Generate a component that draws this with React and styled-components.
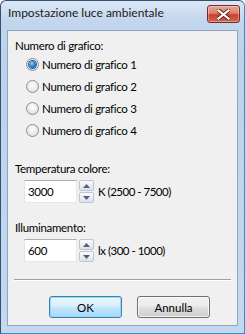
import React from 'react';
import styled, { createGlobalStyle } from 'styled-components';

/* global */

const GlobalStyle = createGlobalStyle`
  html, body {
    margin: 0;
    padding: 0;
    background: #ffffff;
  }
  body {
    font-family: Lato, "Liberation Sans", Arial, sans-serif;
    font-size: 11.5px;
    letter-spacing: -0.3px;
    color: #000000;
  }
`;

/* window frame */

const Window = styled.div`
  width: 245px;
  height: 334px;
  box-sizing: border-box;
  display: flex;
  flex-direction: column;
  border: 1px solid #34506f;
  border-right-color: #2f8fd6;
  border-bottom-color: #2f8fd6;
  border-radius: 6px 6px 0 0;
  background: linear-gradient(180deg, #dbe7f5 0px, #c3d6ee 20px, #bcd2ec 60px, #c4d8f0 100%);
  padding: 0 6px 7px 6px;
`;

const TitleBar = styled.div`
  height: 29px;
  display: flex;
  align-items: flex-start;
  justify-content: space-between;
`;

const Title = styled.span`
  margin-top: 4px;
  padding-left: 1px;
  font-size: 12px;
  letter-spacing: 0;
  line-height: 16px;
  color: #1a1a1a;
`;

const CloseButton = styled.div`
  margin-top: 4px;
  margin-right: -2px;
  width: 33px;
  height: 18px;
  box-sizing: border-box;
  display: flex;
  align-items: center;
  justify-content: center;
  border: 1px solid #6e2e25;
  border-radius: 3px;
  background: linear-gradient(180deg, #eaa596 0%, #dc7f6a 45%, #c8412b 55%, #d5644c 100%);
  box-shadow: inset 0 0 0 1px rgba(255, 255, 255, 0.35);
`;

const Client = styled.div`
  flex: 1;
  background: #f0f0f0;
  border: 1px solid #8ea6c4;
  display: flex;
  flex-direction: column;
  padding: 7px 0 0 7px;
`;

/* content */

const Label = styled.div`
  line-height: 15px;
  margin-bottom: ${props => props.gap || 0}px;
  margin-top: ${props => props.top || 0}px;
`;

const RadioList = styled.div`
  display: flex;
  flex-direction: column;
  gap: 9px;
  padding-left: 11px;
`;

const RadioRow = styled.label`
  display: flex;
  align-items: center;
  height: 13px;
  gap: 3px;
`;

const RadioCircle = styled.span`
  width: 13px;
  height: 13px;
  box-sizing: border-box;
  border-radius: 50%;
  border: 1px solid #8e8f8f;
  background: radial-gradient(circle at 50% 40%, #ffffff 0%, #e8e8e8 60%, #cfcfcf 100%);
  display: flex;
  align-items: center;
  justify-content: center;

  &::after {
    content: '';
    display: ${props => (props.checked ? 'block' : 'none')};
    width: 7px;
    height: 7px;
    border-radius: 50%;
    background: radial-gradient(circle at 40% 35%, #8fd0ff 0%, #2a87d6 45%, #0b4a8f 100%);
    box-shadow: 0 0 0 1px #1f5f9e;
  }
`;

const SpinRow = styled.div`
  display: flex;
  align-items: center;
  padding-left: 9px;
  gap: 2px;
`;

const NumberBox = styled.div`
  width: 53px;
  height: 23px;
  box-sizing: border-box;
  border: 1px solid #e3e9ef;
  border-top-color: #abadb3;
  border-left-color: #e2e3ea;
  background: #ffffff;
  padding: 3px 0 0 3px;
  line-height: 15px;
`;

const SpinButtons = styled.div`
  display: flex;
  flex-direction: column;
  gap: 1px;
  height: 23px;
`;

const SpinButton = styled.div`
  width: 15px;
  height: 11px;
  box-sizing: border-box;
  border: 1px solid #c0c6cf;
  border-radius: 2px;
  background: linear-gradient(180deg, #fbfbfb 0%, #eceef2 50%, #dde2e8 100%);
  display: flex;
  align-items: center;
  justify-content: center;
`;

const Unit = styled.span`
  margin-left: 2px;
  line-height: 15px;
  letter-spacing: -0.5px;
`;

const Separator = styled.div`
  margin: 17px 6px 0 -1px;
  height: 1px;
  background: #a0a0a0;
  border-bottom: 1px solid #ffffff;
`;

const ButtonRow = styled.div`
  display: flex;
  gap: 15px;
  padding-left: 34px;
  margin-top: 15px;
`;

const Button = styled.div`
  width: 73px;
  height: 22px;
  box-sizing: border-box;
  border-radius: 3px;
  display: flex;
  align-items: center;
  justify-content: center;
  letter-spacing: 0;
  border: 1px solid ${props => (props.primary ? '#3c7fb1' : '#707070')};
  background: ${props =>
    props.primary
      ? 'linear-gradient(180deg, #eaf6fd 0%, #d9f0fc 45%, #bee6fd 55%, #a7d9f5 100%)'
      : 'linear-gradient(180deg, #f2f2f2 0%, #ebebeb 45%, #dddddd 55%, #cfcfcf 100%)'};
  box-shadow: inset 0 0 0 1px ${props => (props.primary ? '#9ad6f5' : 'rgba(255,255,255,0.7)')};
`;

const Arrow = ({ up }) => (
  <svg width="7" height="4" viewBox="0 0 7 4">
    <path d={up ? 'M0 4 L3.5 0 L7 4 Z' : 'M0 0 L3.5 4 L7 0 Z'} fill="#4d6185" />
  </svg>
);

const CloseIcon = () => (
  <svg width="13" height="11" viewBox="0 0 13 11">
    <path
      d="M1.5 1.5 L11.5 9.5 M11.5 1.5 L1.5 9.5"
      stroke="#5a1e16"
      strokeWidth="4"
      strokeLinecap="square"
    />
    <path
      d="M1.5 1.5 L11.5 9.5 M11.5 1.5 L1.5 9.5"
      stroke="#ffffff"
      strokeWidth="2.2"
      strokeLinecap="square"
    />
  </svg>
);

const Spin = ({ value, unit }) => (
  <SpinRow>
    <NumberBox>{value}</NumberBox>
    <SpinButtons>
      <SpinButton><Arrow up /></SpinButton>
      <SpinButton><Arrow /></SpinButton>
    </SpinButtons>
    <Unit>{unit}</Unit>
  </SpinRow>
);

const charts = [1, 2, 3, 4];

const App = () => {
  return (
    <>
      <GlobalStyle />
      <Window>
        <TitleBar>
          <Title>Impostazione luce ambientale</Title>
          <CloseButton><CloseIcon /></CloseButton>
        </TitleBar>

        <Client>
          <Label gap={5}>Numero di grafico:</Label>
          <RadioList>
            {charts.map(n => (
              <RadioRow key={n}>
                <RadioCircle checked={n === 1} />
                Numero di grafico {n}
              </RadioRow>
            ))}
          </RadioList>

          <Label top={24} gap={4}>Temperatura colore:</Label>
          <Spin value="3000" unit="K (2500 - 7500)" />

          <Label top={17} gap={4}>Illuminamento:</Label>
          <Spin value="600" unit="lx (300 - 1000)" />

          <Separator />

          <ButtonRow>
            <Button primary>OK</Button>
            <Button>Annulla</Button>
          </ButtonRow>
        </Client>
      </Window>
    </>
  );
};

export default App;
